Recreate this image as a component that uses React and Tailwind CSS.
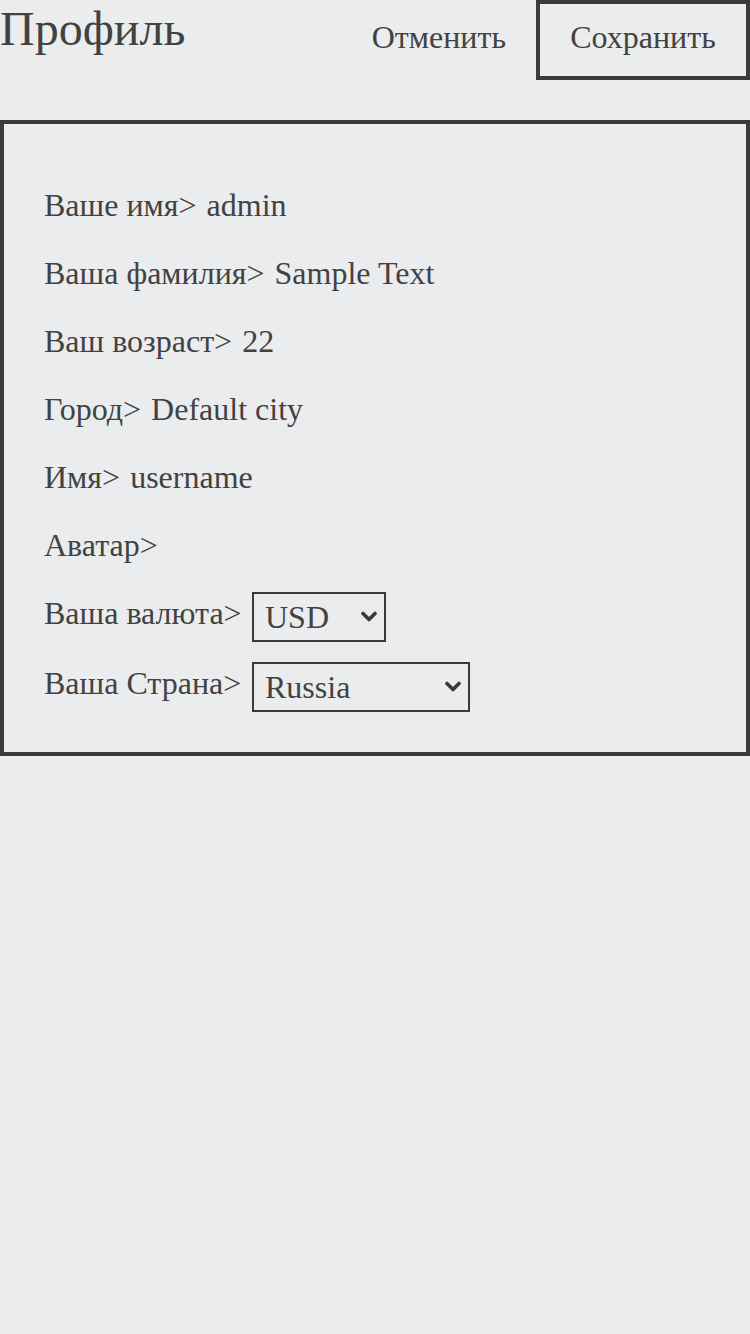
import React from "react";

const serif = "font-['Liberation_Serif','Times_New_Roman',serif]";

function Row({ label, value }) {
  return (
    <div className={`${serif} flex items-start text-[32px] leading-[37px] text-[#424242] whitespace-pre`}>
      <span>{label}&gt;</span>
      <span className="ml-[2px]">{" " + value}</span>
    </div>
  );
}

function Chevron() {
  return (
    <svg width="18" height="12" viewBox="0 0 18 12" className="pointer-events-none absolute right-[8px] top-1/2 -translate-y-[50%]">
      <path d="M3 2.5 L9 8.5 L15 2.5" fill="none" stroke="#3a3a3a" strokeWidth="3.6" strokeLinecap="round" strokeLinejoin="round" />
    </svg>
  );
}

function SelectRow({ label, value, options, width }) {
  return (
    <div className="flex items-start text-[32px] text-[#424242]">
      <span className={`${serif} w-[208px] leading-[37px] mt-[3px]`}>{label}&gt;</span>
      <div className="relative h-[50px]" style={{ width }}>
        <select
          defaultValue={value}
          className={`${serif} appearance-none block w-full h-[50px] border-2 border-[#3a3a3a] bg-transparent pl-[11px] text-[32px] leading-[37px] text-[#424242] rounded-none outline-none`}
        >
          {options.map((o) => (
            <option key={o}>{o}</option>
          ))}
        </select>
        <Chevron />
      </div>
    </div>
  );
}

export default function App() {
  return (
    <div className="min-h-[1334px] w-[750px] bg-[#ebecee] text-[#424242]">
      <header className="flex items-start justify-between">
        <h1 className={`${serif} text-[48px] leading-[58px] font-normal`}>Профиль</h1>
        <div className="flex items-start">
          <button className={`${serif} h-[80px] border-4 border-transparent pb-[6px] pl-[30px] pr-[26px] text-[32px] leading-[37px]`}>Отменить</button>
          <button className={`${serif} h-[80px] w-[214px] border-4 border-[#3a3a3a] pb-[6px] text-[32px] leading-[37px]`}>Сохранить</button>
        </div>
      </header>
      <section className="mt-[40px] border-4 border-[#3a3a3a] pl-[40px] pr-[40px] pt-[63px] pb-[40px]">
        <div className="flex flex-col gap-[31px]">
          <Row label="Ваше имя" value="admin" />
          <Row label="Ваша фамилия" value="Sample Text" />
          <Row label="Ваш возраст" value="22" />
          <Row label="Город" value="Default city" />
          <Row label="Имя" value="username" />
          <div className={`${serif} text-[32px] leading-[37px]`}>Аватар&gt;</div>
        </div>
        <div className="mt-[28px] flex flex-col gap-[20px]">
          <SelectRow label="Ваша валюта" value="USD" options={["USD", "EUR", "RUB"]} width="134px" />
          <SelectRow label="Ваша Страна" value="Russia" options={["Russia", "Belarus", "Kazakhstan"]} width="218px" />
        </div>
      </section>
    </div>
  );
}
